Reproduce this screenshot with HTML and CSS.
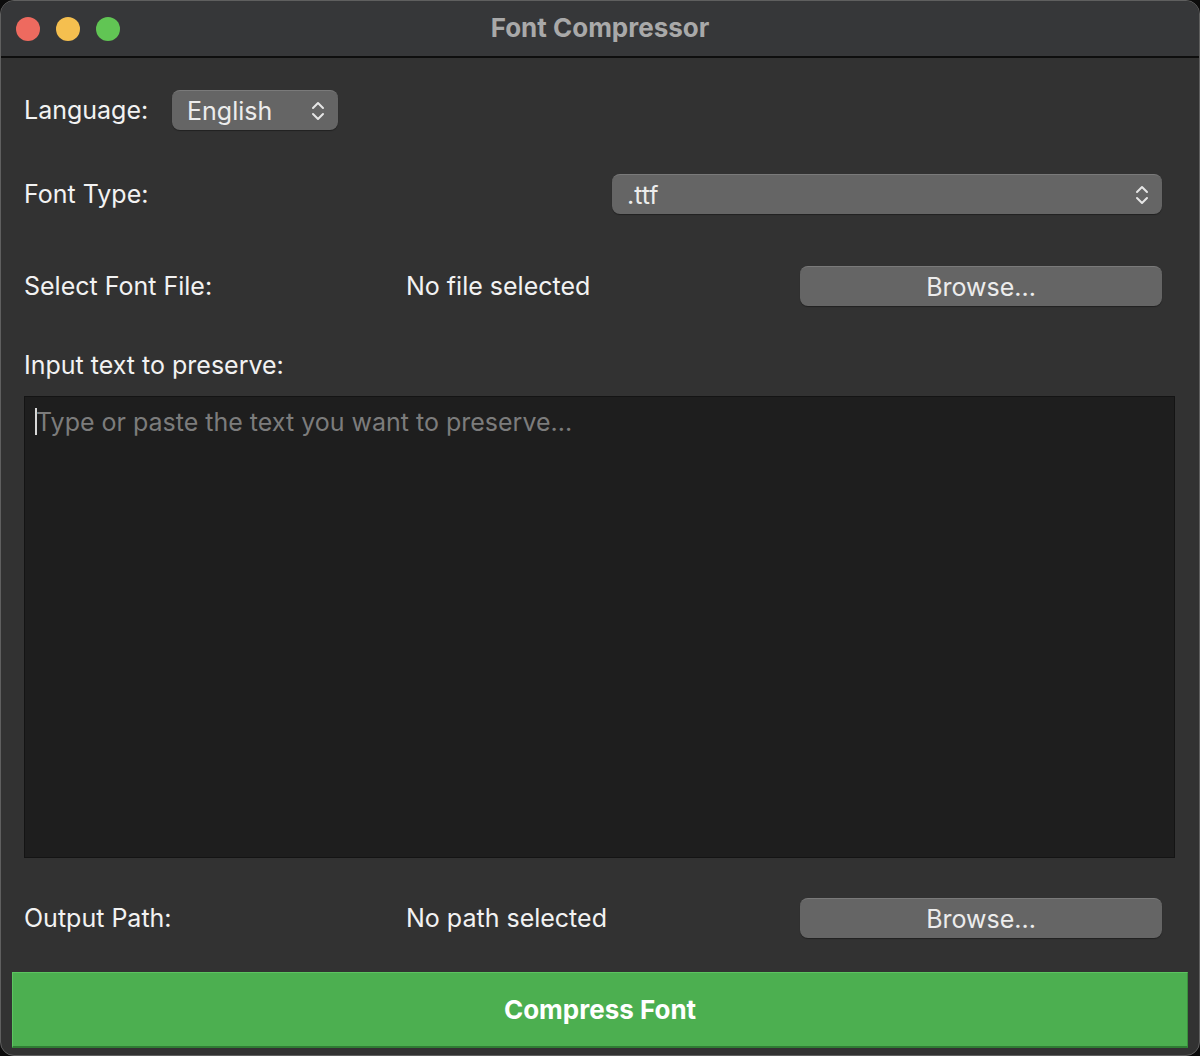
FILE: index.html
```html
<!DOCTYPE html>
<html>
<head>
<meta charset="utf-8">
<link rel="stylesheet" href="styles.css">
</head>
<body>
<div class="window">
  <div class="titlebar">
    <div class="lights">
      <span class="light red"></span>
      <span class="light yellow"></span>
      <span class="light green"></span>
    </div>
    <div class="title">Font Compressor</div>
  </div>
  <div class="content">
    <div class="row row-lang">
      <span class="label">Language:</span>
      <div class="select select-lang">
        <span class="select-text">English</span>
        <svg class="chev" width="14" height="22" viewBox="0 0 14 22"><path d="M2 8 L7 3 L12 8 M2 14 L7 19 L12 14" fill="none" stroke="#e6e6e6" stroke-width="2" stroke-linecap="round" stroke-linejoin="round"/></svg>
      </div>
    </div>
    <div class="row row-type">
      <span class="label">Font Type:</span>
      <div class="select select-type">
        <span class="select-text">.ttf</span>
        <svg class="chev" width="14" height="22" viewBox="0 0 14 22"><path d="M2 8 L7 3 L12 8 M2 14 L7 19 L12 14" fill="none" stroke="#e6e6e6" stroke-width="2" stroke-linecap="round" stroke-linejoin="round"/></svg>
      </div>
    </div>
    <div class="row row-file">
      <span class="label">Select Font File:</span>
      <span class="value">No file selected</span>
      <div class="button">Browse...</div>
    </div>
    <div class="section-label">Input text to preserve:</div>
    <div class="textarea">
      <span class="caret"></span><span class="placeholder">Type or paste the text you want to preserve...</span>
    </div>
    <div class="row row-out">
      <span class="label">Output Path:</span>
      <span class="value">No path selected</span>
      <div class="button">Browse...</div>
    </div>
    <div class="compress">Compress Font</div>
  </div>
</div>
</body>
</html>
```
FILE: styles.css
```css
html, body {
  margin: 0;
  padding: 0;
  background: #0c0c0c;
}
body {
  width: 1200px;
  height: 1056px;
  font-family: Inter, "Noto Sans", "Liberation Sans", sans-serif;
  -webkit-font-smoothing: antialiased;
}
.window {
  box-sizing: border-box;
  width: 1200px;
  height: 1056px;
  border: 1px solid #5f5f5f;
  border-radius: 14px;
  background: #323232;
  overflow: hidden;
  display: flex;
  flex-direction: column;
}
.titlebar {
  height: 55px;
  background: #363739;
  border-bottom: 2px solid #0e0e0e;
  display: flex;
  align-items: center;
  position: relative;
  flex: none;
}
.lights {
  display: flex;
  gap: 16px;
  padding-left: 15px;
}
.light {
  width: 24px;
  height: 24px;
  border-radius: 50%;
  display: block;
}
.red { background: #ee6a5f; }
.yellow { background: #f5bf4f; }
.green { background: #61c554; }
.title {
  position: absolute;
  left: 0;
  right: 0;
  top: 0;
  height: 53px;
  line-height: 53px;
  text-align: center;
  color: #a9a9a9;
  font-weight: 700;
  font-size: 26px;
}
.content {
  display: flex;
  flex-direction: column;
  padding: 0 37px 0 23px;
  color: #f2f2f2;
  font-size: 25px;
}
.row {
  display: flex;
  align-items: center;
  height: 40px;
}
.row-lang { margin-top: 32px; }
.row-type { margin-top: 44px; }
.row-file { margin-top: 52px; }
.row-out { margin-top: 40px; }
.label { flex: none; }
.row-file .label, .row-out .label { width: 382px; }
.row-lang .label { width: 148px; }
.row-type .label { width: 588px; }
.value { width: 394px; flex: none; }
.select {
  box-sizing: border-box;
  height: 40px;
  border-radius: 8px;
  background: #656565;
  border-top: 1px solid #7a7a7a;
  box-shadow: 0 1px 1px rgba(0,0,0,0.35);
  display: flex;
  align-items: center;
  justify-content: space-between;
  padding: 0 13px 0 15px;
  color: #ececec;
}
.select-lang { width: 166px; }
.select-type { width: 550px; }
.chev { display: block; }
.button {
  box-sizing: border-box;
  width: 362px;
  height: 40px;
  border-radius: 8px;
  background: #656565;
  border-top: 1px solid #7a7a7a;
  box-shadow: 0 1px 1px rgba(0,0,0,0.35);
  display: flex;
  align-items: center;
  justify-content: center;
  color: #ececec;
}
.section-label {
  margin-top: 44px;
  height: 30px;
  line-height: 30px;
}
.textarea {
  box-sizing: border-box;
  margin-top: 16px;
  width: 1151px;
  height: 462px;
  background: #1e1e1e;
  border: 1px solid #141414;
  padding: 10px 0 0 10px;
  display: flex;
  align-items: flex-start;
}
.caret {
  display: block;
  width: 2px;
  height: 27px;
  background: #d8d8d8;
  margin-top: 1px;
}
.placeholder {
  color: #7c7c7c;
  line-height: 30px;
  margin-left: -1px;
}
.compress {
  box-sizing: border-box;
  margin-top: 34px;
  margin-left: -12px;
  width: 1176px;
  height: 76px;
  background: #4caf50;
  border-top: 1px solid #5cc460;
  border-left: 1px solid #5cc460;
  border-right: 1px solid #3a8f3d;
  border-bottom: 2px solid #2f7d33;
  display: flex;
  align-items: center;
  justify-content: center;
  color: #ffffff;
  font-weight: 700;
  font-size: 26px;
}
```
